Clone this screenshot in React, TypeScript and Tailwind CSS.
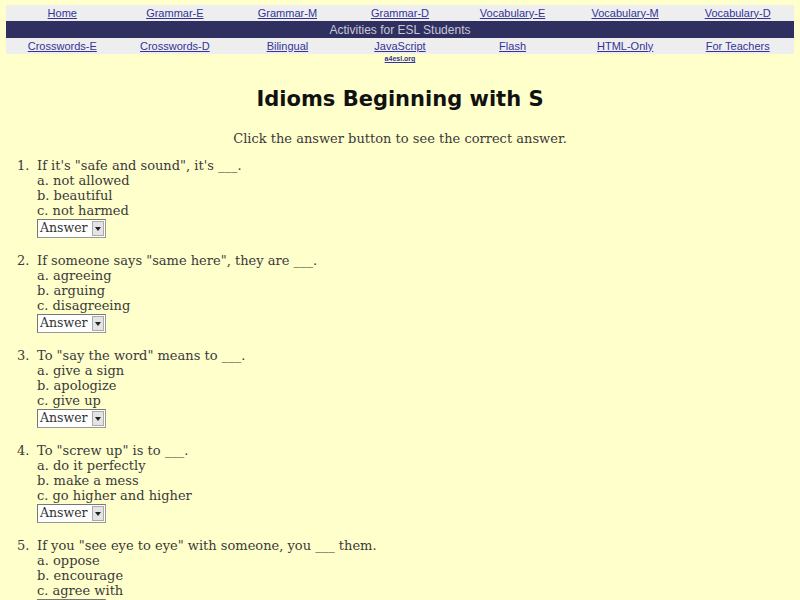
const navTop = ["Home", "Grammar-E", "Grammar-M", "Grammar-D", "Vocabulary-E", "Vocabulary-M", "Vocabulary-D"]
const navBottom = ["Crosswords-E", "Crosswords-D", "Bilingual", "JavaScript", "Flash", "HTML-Only", "For Teachers"]

const questions = [
  { q: 'If it\'s "safe and sound", it\'s ___.', a: ["not allowed", "beautiful", "not harmed"] },
  { q: 'If someone says "same here", they are ___.', a: ["agreeing", "arguing", "disagreeing"] },
  { q: 'To "say the word" means to ___.', a: ["give a sign", "apologize", "give up"] },
  { q: 'To "screw up" is to ___.', a: ["do it perfectly", "make a mess", "go higher and higher"] },
  { q: 'If you "see eye to eye" with someone, you ___ them.', a: ["oppose", "encourage", "agree with"] },
]

const NavRow = ({ items }: { items: string[] }) => (
  <div className="grid grid-cols-7 bg-[#eeeeee] h-[16px] items-center">
    {items.map((n) => (
      <a key={n} href="#" className="text-center text-[11px] leading-none text-[#333399] underline">
        {n}
      </a>
    ))}
  </div>
)

const AnswerBox = () => (
  <div className="flex items-center w-[69px] h-[19px] bg-white border border-[#999] border-t-[#777] border-l-[#777] mt-[1px]">
    <span className="flex-1 pl-[2px] text-[12.5px] leading-none text-[#333]">Answer</span>
    <span className="w-[12px] h-[15px] mr-[1px] bg-[#e4e4e4] border border-[#aaa] flex items-center justify-center">
      <svg width="6" height="4" viewBox="0 0 6 4">
        <path d="M0 0H6L3 4Z" fill="#222" />
      </svg>
    </span>
  </div>
)

export default function App() {
  return (
    <div className="min-h-screen bg-[#ffffcc] font-['DejaVu_Serif',serif] text-[#3a3a3a]">
      <div className="px-[6px] pt-[5px] font-['Liberation_Sans',Arial,sans-serif]">
        <NavRow items={navTop} />
        <div className="bg-[#2f2f60] h-[17px] flex items-center justify-center text-[12px] text-[#c8c8d8]">
          Activities for ESL Students
        </div>
        <NavRow items={navBottom} />
        <div className="grid grid-cols-7">
          <div className="col-start-4 text-center text-[7px] font-bold text-[#333399] underline leading-[9px]">
            a4esl.org
          </div>
        </div>
      </div>

      <h1 className="text-center mt-[22px] text-[21px] font-bold text-[#111] font-['Comic_Sans_MS','DejaVu_Sans',sans-serif] leading-[28px]">
        Idioms Beginning with S
      </h1>

      <p className="text-center mt-[18px] text-[13px] leading-[15px]">
        Click the answer button to see the correct answer.
      </p>

      <ol className="mt-[12px] pl-[17px] text-[13px] leading-[15px]">
        {questions.map((item, i) => (
          <li key={i} className="flex mb-[15px]">
            <span className="w-[20px] shrink-0">{i + 1}.</span>
            <div>
              <div>{item.q}</div>
              {item.a.map((ans, j) => (
                <div key={j}>
                  {"abc"[j]}. {ans}
                </div>
              ))}
              <AnswerBox />
            </div>
          </li>
        ))}
      </ol>
    </div>
  )
}
